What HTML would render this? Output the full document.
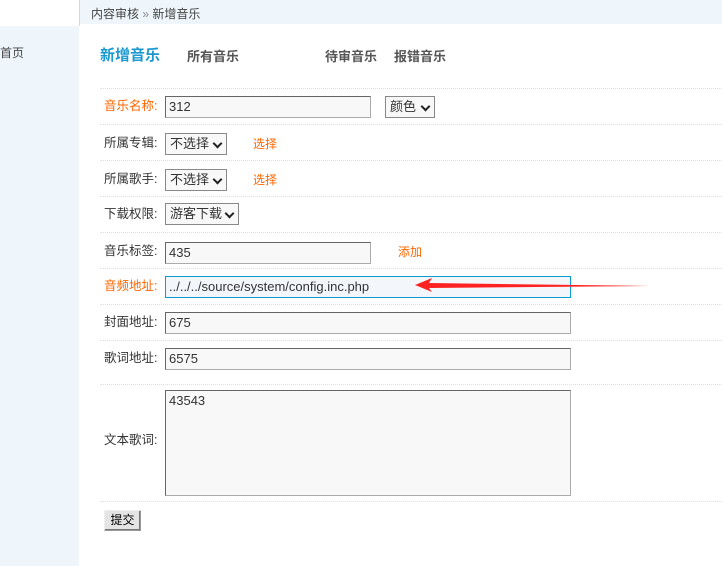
<!DOCTYPE html>
<html><head><meta charset="utf-8"><style>
*{margin:0;padding:0;box-sizing:border-box}
body{width:722px;height:566px;position:relative;overflow:hidden;background:#fff;font-family:"Liberation Sans","Noto Sans CJK SC",sans-serif;font-size:12px;color:#333}
.a{position:absolute;white-space:nowrap}
.sep{position:absolute;left:100px;right:0;height:0;border-top:1px dotted #cfe4f0}
.in{position:absolute;height:22px;border:1px solid #aaa;border-top-color:#666;border-left-color:#666;background:#f8f8f8;font-size:13px;padding:2px 3px;line-height:16px;color:#333}
.sel{position:absolute;height:22px;border:1px solid #888;background:#f8f8f8;font-size:13px;padding:2px 4px;line-height:16px}
.sel:after{content:"";position:absolute;right:5px;top:6px;width:5px;height:5px;border-right:2px solid #222;border-bottom:2px solid #222;transform:rotate(45deg)}
.lb{position:absolute;left:104px;font-size:12.5px;line-height:14px}
.or{color:#f60}
.tab{position:absolute;top:46px;font-size:13px;font-weight:bold;color:#555}
</style></head><body>
<div class="a" style="left:0;top:26px;width:79px;height:540px;background:#eef6fb"></div>
<div class="a" style="left:79px;top:0;width:1px;height:26px;background:#cfdbe3"></div>
<div class="a" style="left:80px;top:0;right:0;height:24px;background:#eef6fb"></div>
<div class="a" style="left:91px;top:5px;font-size:12px;color:#444">内容审核 <span style="color:#888">»</span> 新增音乐</div>
<div class="a" style="left:0;top:44px;font-size:12px;color:#444">首页</div>
<div class="tab" style="left:100px;top:44px;font-size:15px;color:#1a98d0">新增音乐</div>
<div class="tab" style="left:187px">所有音乐</div>
<div class="tab" style="left:325px">待审音乐</div>
<div class="tab" style="left:394px">报错音乐</div>
<div class="sep" style="top:88px"></div><div class="sep" style="top:124px"></div><div class="sep" style="top:160px"></div><div class="sep" style="top:196px"></div><div class="sep" style="top:232px"></div><div class="sep" style="top:268px"></div><div class="sep" style="top:304px"></div><div class="sep" style="top:340px"></div><div class="sep" style="top:384px"></div><div class="sep" style="top:501px"></div>
<div class="lb or" style="top:99px">音乐名称:</div>
<div class="in" style="left:165px;top:96px;width:206px">312</div>
<div class="sel" style="left:385px;top:96px;width:50px">颜色</div>
<div class="lb" style="top:136px">所属专辑:</div>
<div class="sel" style="left:165px;top:133px;width:62px">不选择</div>
<div class="a or" style="left:253px;top:135px">选择</div>
<div class="lb" style="top:172px">所属歌手:</div>
<div class="sel" style="left:165px;top:169px;width:62px">不选择</div>
<div class="a or" style="left:253px;top:171px">选择</div>
<div class="lb" style="top:207px">下载权限:</div>
<div class="sel" style="left:165px;top:203px;width:74px">游客下载</div>
<div class="lb" style="top:244px">音乐标签:</div>
<div class="in" style="left:165px;top:242px;width:206px">435</div>
<div class="a or" style="left:398px;top:243px">添加</div>
<div class="lb or" style="top:279px">音频地址:</div>
<div class="in" style="left:165px;top:276px;width:406px;border:1px solid #0a9bd0;background:#f3f7fb">../../../source/system/config.inc.php</div>
<svg class="a" style="left:410px;top:277px" width="245" height="18"><polygon points="5,8 22,1 19,6 240,9 19,11 22,15" fill="#f22"/></svg>
<div class="lb" style="top:315px">封面地址:</div>
<div class="in" style="left:165px;top:312px;width:406px">675</div>
<div class="lb" style="top:351px">歌词地址:</div>
<div class="in" style="left:165px;top:348px;width:406px">6575</div>
<div class="lb" style="top:433px">文本歌词:</div>
<div class="in" style="left:165px;top:390px;width:406px;height:106px;line-height:16px">43543</div>
<div class="a" style="left:104px;top:510px;width:37px;height:21px;background:#e4e4e4;border:1px solid #999;border-top-color:#eee;border-left-color:#eee;box-shadow:inset -1px -1px 0 #777;font-size:12px;line-height:19px;text-align:center;color:#000">提交</div>
</body></html>
